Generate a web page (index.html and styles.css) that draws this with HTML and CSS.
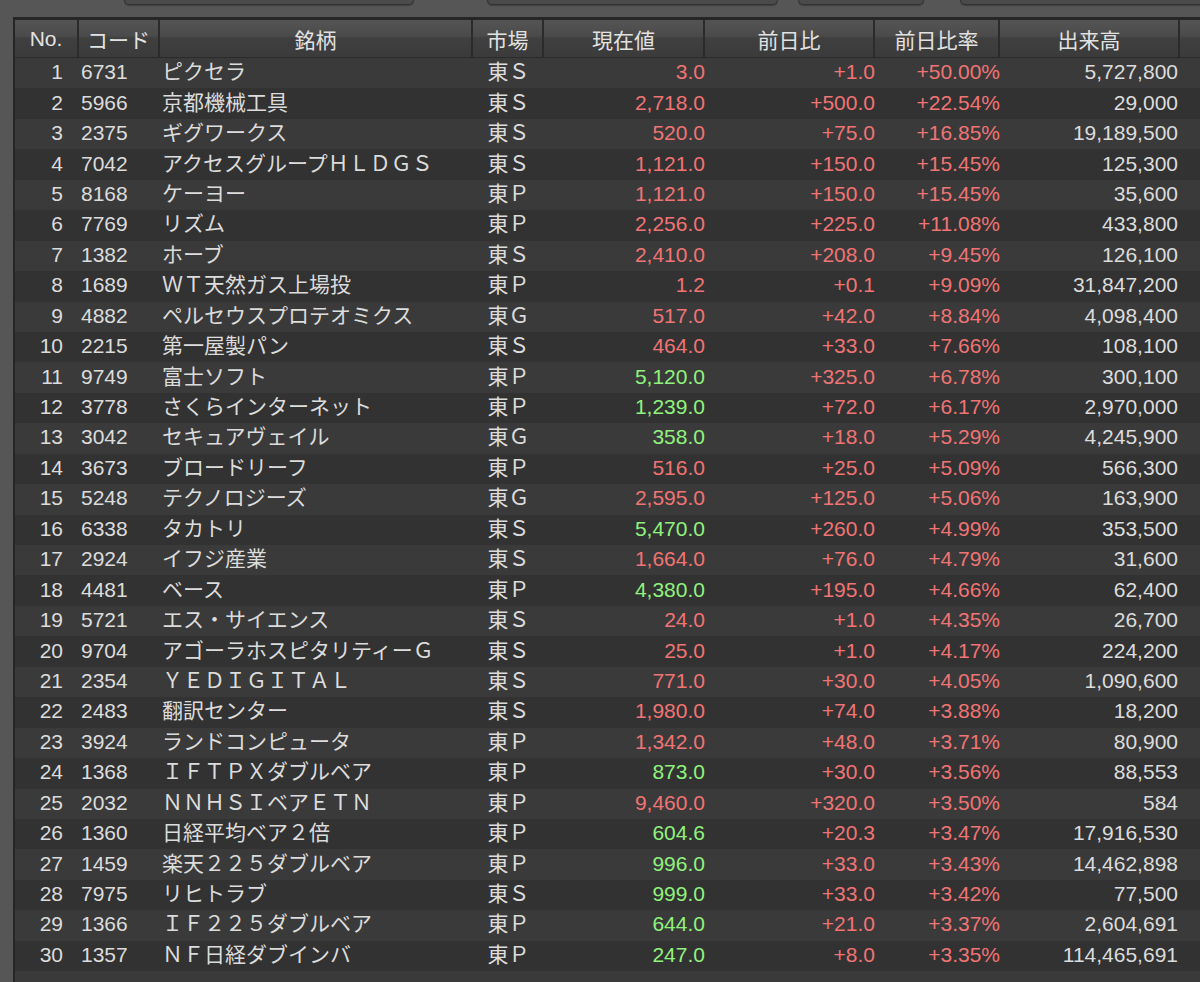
FILE: index.html
```html
<!DOCTYPE html>
<html lang="ja">
<head>
<meta charset="utf-8">
<title>ランキング</title>
<link rel="stylesheet" href="styles.css">
</head>
<body>
<div class="toolbar">
  <div class="tb-btn b1"></div>
  <div class="tb-btn b2"></div>
  <div class="tb-btn b3"></div>
  <div class="tb-btn b4"></div>
</div>
<div class="grid">
  <div class="row head">
    <div class="c">No.</div><div class="c">コード</div><div class="c">銘柄</div><div class="c">市場</div><div class="c">現在値</div><div class="c">前日比</div><div class="c">前日比率</div><div class="c">出来高</div><div class="c"></div>
  </div>
  <div class="body" id="body"></div>
</div>
<script src="app.js"></script>
</body>
</html>
```

FILE: app.js
```js
var data = [
["1","6731","ピクセラ","東Ｓ","3.0","r","+1.0","+50.00%","5,727,800"],
["2","5966","京都機械工具","東Ｓ","2,718.0","r","+500.0","+22.54%","29,000"],
["3","2375","ギグワークス","東Ｓ","520.0","r","+75.0","+16.85%","19,189,500"],
["4","7042","アクセスグループＨＬＤＧＳ","東Ｓ","1,121.0","r","+150.0","+15.45%","125,300"],
["5","8168","ケーヨー","東Ｐ","1,121.0","r","+150.0","+15.45%","35,600"],
["6","7769","リズム","東Ｐ","2,256.0","r","+225.0","+11.08%","433,800"],
["7","1382","ホーブ","東Ｓ","2,410.0","r","+208.0","+9.45%","126,100"],
["8","1689","ＷＴ天然ガス上場投","東Ｐ","1.2","r","+0.1","+9.09%","31,847,200"],
["9","4882","ペルセウスプロテオミクス","東Ｇ","517.0","r","+42.0","+8.84%","4,098,400"],
["10","2215","第一屋製パン","東Ｓ","464.0","r","+33.0","+7.66%","108,100"],
["11","9749","富士ソフト","東Ｐ","5,120.0","g","+325.0","+6.78%","300,100"],
["12","3778","さくらインターネット","東Ｐ","1,239.0","g","+72.0","+6.17%","2,970,000"],
["13","3042","セキュアヴェイル","東Ｇ","358.0","g","+18.0","+5.29%","4,245,900"],
["14","3673","ブロードリーフ","東Ｐ","516.0","r","+25.0","+5.09%","566,300"],
["15","5248","テクノロジーズ","東Ｇ","2,595.0","r","+125.0","+5.06%","163,900"],
["16","6338","タカトリ","東Ｓ","5,470.0","g","+260.0","+4.99%","353,500"],
["17","2924","イフジ産業","東Ｓ","1,664.0","r","+76.0","+4.79%","31,600"],
["18","4481","ベース","東Ｐ","4,380.0","g","+195.0","+4.66%","62,400"],
["19","5721","エス・サイエンス","東Ｓ","24.0","r","+1.0","+4.35%","26,700"],
["20","9704","アゴーラホスピタリティーＧ","東Ｓ","25.0","r","+1.0","+4.17%","224,200"],
["21","2354","ＹＥＤＩＧＩＴＡＬ","東Ｓ","771.0","r","+30.0","+4.05%","1,090,600"],
["22","2483","翻訳センター","東Ｓ","1,980.0","r","+74.0","+3.88%","18,200"],
["23","3924","ランドコンピュータ","東Ｐ","1,342.0","r","+48.0","+3.71%","80,900"],
["24","1368","ＩＦＴＰＸダブルベア","東Ｐ","873.0","g","+30.0","+3.56%","88,553"],
["25","2032","ＮＮＨＳＩベアＥＴＮ","東Ｐ","9,460.0","r","+320.0","+3.50%","584"],
["26","1360","日経平均ベア２倍","東Ｐ","604.6","g","+20.3","+3.47%","17,916,530"],
["27","1459","楽天２２５ダブルベア","東Ｐ","996.0","g","+33.0","+3.43%","14,462,898"],
["28","7975","リヒトラブ","東Ｓ","999.0","g","+33.0","+3.42%","77,500"],
["29","1366","ＩＦ２２５ダブルベア","東Ｐ","644.0","g","+21.0","+3.37%","2,604,691"],
["30","1357","ＮＦ日経ダブインバ","東Ｐ","247.0","g","+8.0","+3.35%","114,465,691"]
];
var body = document.getElementById("body");
data.forEach(function (d) {
  var row = document.createElement("div");
  row.className = "row";
  var cells = [
    ["no", d[0]], ["code", d[1]], ["name", d[2]], ["mkt", d[3]],
    ["price " + (d[5] === "g" ? "up2" : "up"), d[4]],
    ["chg up", d[6]], ["pct up", d[7]], ["vol", d[8]], ["end", ""]
  ];
  cells.forEach(function (c) {
    var el = document.createElement("div");
    el.className = "c " + c[0];
    el.textContent = c[1];
    row.appendChild(el);
  });
  body.appendChild(row);
});
var filler = document.createElement("div");
filler.className = "row filler";
body.appendChild(filler);
```

FILE: styles.css
```css
html, body {
  margin: 0;
  padding: 0;
  height: 100%;
  overflow: hidden;
}
body {
  background: #565656;
  font-family: "Liberation Sans", "Noto Sans CJK JP", sans-serif;
  font-size: 21px;
  color: #dcdcdc;
}
.toolbar {
  height: 17px;
  position: relative;
}
.tb-btn {
  position: absolute;
  top: -10px;
  height: 13px;
  background: #4b4b4b;
  border: 1px solid #333;
  border-radius: 0 0 5px 5px;
  box-shadow: 0 1px 1px rgba(0,0,0,0.25);
}
.b1 { left: 124px; width: 288px; }
.b2 { left: 487px; width: 289px; }
.b3 { left: 798px; width: 124px; }
.b4 { left: 960px; width: 260px; }
.grid {
  margin-left: 13px;
  border-left: 2px solid #262626;
  border-top: 3px solid #262626;
  height: calc(100% - 20px);
  width: 1205px;
  overflow: hidden;
}
.row {
  display: grid;
  grid-template-columns: 64px 81px 313px 71px 161px 170px 125px 180px 40px;
  height: 30.45px;
  align-items: center;
  white-space: nowrap;
}
.body .row .c { padding-bottom: 2px; line-height: 26px; }
.body .row:nth-child(odd) { background: #3a3a3a; }
.body .row:nth-child(even) { background: #323232; }
.row.filler { height: 40px; }
.row.head {
  height: 38px;
  background: linear-gradient(#545454 0%, #4b4b4b 42%, #3f3f3f 50%, #3b3b3b 100%);
  border-bottom: 1px solid #2a2a2a;
  box-sizing: border-box;
  align-items: stretch;
}
.head .c {
  display: flex;
  align-items: center;
  justify-content: center;
  border-right: 2px solid #2b2b2b;
  color: #e2e2e2;
  padding-top: 1px;
}
.head .c:last-child { border-right: none; }
.c { overflow: hidden; box-sizing: border-box; }
.no { text-align: right; padding-right: 16px; }
.code { padding-left: 2px; }
.name { padding-left: 2px; }
.mkt { text-align: center; }
.price, .chg, .pct { text-align: right; padding-right: 0; }
.vol { text-align: right; padding-right: 2px; }
.up { color: #f07474; }
.up2 { color: #90f27c; }
```
